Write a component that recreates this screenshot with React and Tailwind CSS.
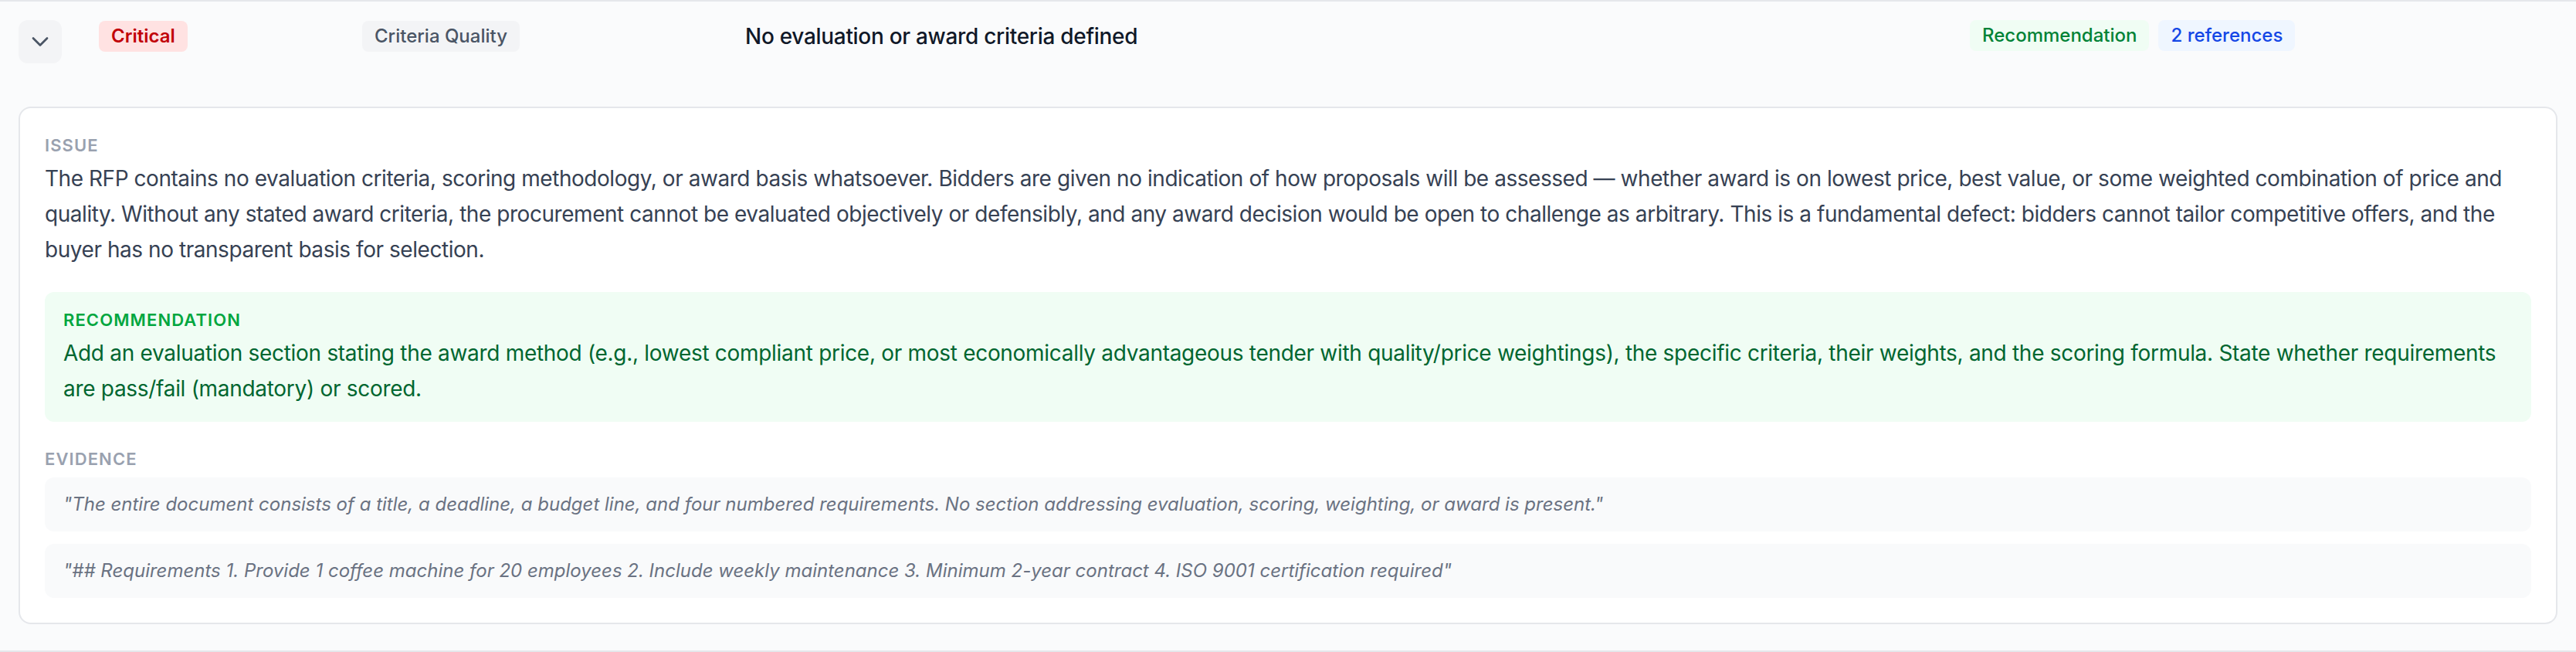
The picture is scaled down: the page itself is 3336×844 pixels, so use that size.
import React from 'react';
import { ChevronDown } from 'lucide-react';

const issueText =
  'The RFP contains no evaluation criteria, scoring methodology, or award basis whatsoever. Bidders are given no indication of how proposals will be assessed — whether award is on lowest price, best value, or some weighted combination of price and quality. Without any stated award criteria, the procurement cannot be evaluated objectively or defensibly, and any award decision would be open to challenge as arbitrary. This is a fundamental defect: bidders cannot tailor competitive offers, and the buyer has no transparent basis for selection.';

const recommendationText =
  'Add an evaluation section stating the award method (e.g., lowest compliant price, or most economically advantageous tender with quality/price weightings), the specific criteria, their weights, and the scoring formula. State whether requirements are pass/fail (mandatory) or scored.';

const evidence = [
  '"The entire document consists of a title, a deadline, a budget line, and four numbered requirements. No section addressing evaluation, scoring, weighting, or award is present."',
  '"## Requirements 1. Provide 1 coffee machine for 20 employees 2. Include weekly maintenance 3. Minimum 2-year contract 4. ISO 9001 certification required"',
];

const Badge = ({ className, children }) => (
  <span className={`inline-block rounded-[8px] px-[16px] py-[4px] text-[24px] leading-[32px] ${className}`}>
    {children}
  </span>
);

const SectionLabel = ({ className = 'text-gray-400', children }) => (
  <div className={`text-[22px] leading-[32px] font-semibold uppercase tracking-[0.05em] ${className}`}>
    {children}
  </div>
);

const App = () => {
  return (
    <div
      className="w-full min-h-screen bg-[#fafbfc] border-y-2 border-gray-200"
      style={{ fontFamily: 'Inter, "Noto Sans", sans-serif' }}
    >
      {/* Finding row */}
      <div className="flex items-start pl-[24px] py-[24px]">
        <div className="w-[104px] shrink-0">
          <button className="w-[56px] h-[56px] rounded-[12px] bg-gray-100 flex items-center justify-center text-gray-600">
            <ChevronDown size={36} strokeWidth={1.8} />
          </button>
        </div>
        <div className="w-[341px] shrink-0 pt-[1px]">
          <Badge className="bg-red-100 text-red-700 font-semibold">Critical</Badge>
        </div>
        <div className="w-[496px] shrink-0 pt-[1px]">
          <Badge className="bg-gray-100 text-gray-600 font-medium">Criteria Quality</Badge>
        </div>
        <div className="w-[1586px] shrink-0 pt-[1px] text-[28px] leading-[40px] font-medium tracking-[-0.3px] text-gray-900">
          No evaluation or award criteria defined
        </div>
        <div className="flex gap-[12px]">
          <Badge className="bg-green-50 text-green-700 font-medium">Recommendation</Badge>
          <Badge className="bg-blue-50 text-blue-700 font-medium">2 references</Badge>
        </div>
      </div>

      {/* Expanded details */}
      <div className="px-[24px] pt-[32px] pb-[34px]">
        <div className="bg-white border-2 border-gray-200 rounded-[16px] px-[32px] pt-[32px] pb-[32px]">
          <SectionLabel>Issue</SectionLabel>
          <p className="mt-[4px] text-[28px] leading-[46px] tracking-[-0.45px] text-gray-700">{issueText}</p>

          <div className="mt-[32px] bg-green-50 rounded-[12px] px-[24px] py-[20px]">
            <SectionLabel className="text-green-600">Recommendation</SectionLabel>
            <p className="mt-[4px] text-[28px] leading-[46px] tracking-[-0.3px] text-green-800">{recommendationText}</p>
          </div>

          <div className="mt-[32px]">
            <SectionLabel>Evidence</SectionLabel>
            <div className="mt-[8px] flex flex-col gap-[16px]">
              {evidence.map((q, i) => (
                <div
                  key={i}
                  className="bg-gray-50 rounded-[12px] px-[24px] py-[19px] text-[24px] leading-[32px] italic text-gray-500"
                >
                  {q}
                </div>
              ))}
            </div>
          </div>
        </div>
      </div>
    </div>
  );
};

export default App;
